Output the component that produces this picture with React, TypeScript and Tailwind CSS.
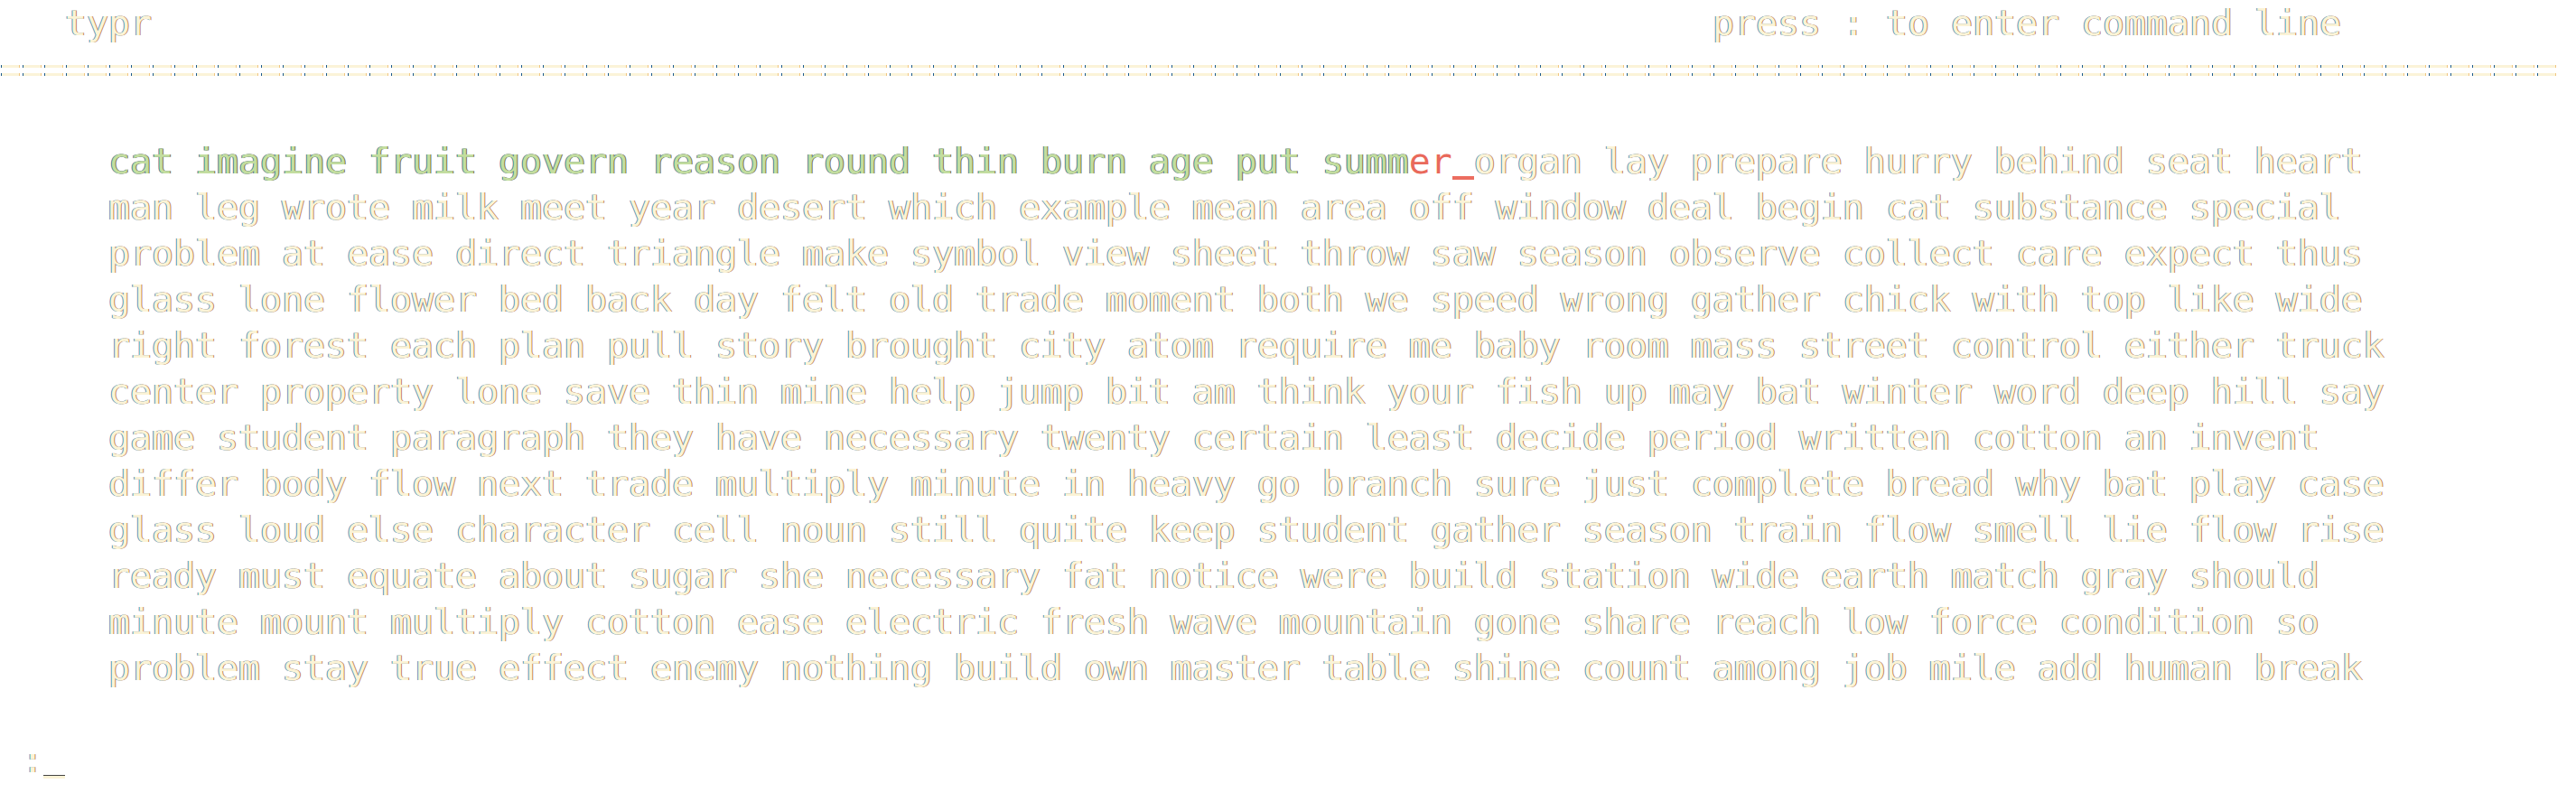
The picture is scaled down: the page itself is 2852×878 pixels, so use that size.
import React from "react";

const lines: string[] = [
  "man leg wrote milk meet year desert which example mean area off window deal begin cat substance special",
  "problem at ease direct triangle make symbol view sheet throw saw season observe collect care expect thus",
  "glass lone flower bed back day felt old trade moment both we speed wrong gather chick with top like wide",
  "right forest each plan pull story brought city atom require me baby room mass street control either truck",
  "center property lone save thin mine help jump bit am think your fish up may bat winter word deep hill say",
  "game student paragraph they have necessary twenty certain least decide period written cotton an invent",
  "differ body flow next trade multiply minute in heavy go branch sure just complete bread why bat play case",
  "glass loud else character cell noun still quite keep student gather season train flow smell lie flow rise",
  "ready must equate about sugar she necessary fat notice were build station wide earth match gray should",
  "minute mount multiply cotton ease electric fresh wave mountain gone share reach low force condition so",
  "problem stay true effect enemy nothing build own master table shine count among job mile add human break",
];

function DoubleRule() {
  return (
    <div className="h-[51px] pt-[21px] flex flex-col gap-[6px]">
      <div className="w-[2832px] h-[3px] bg-[repeating-linear-gradient(90deg,transparent_0_1px,#1b5a8c_1px_2px,#fbf3d8_2px_21px,#f1c682_21px_22px,transparent_22px_24px)]" />
      <div className="w-[2832px] h-[3px] bg-[repeating-linear-gradient(90deg,transparent_0_1px,#1b5a8c_1px_2px,#fbf3d8_2px_21px,#f1c682_21px_22px,transparent_22px_24px)]" />
    </div>
  );
}

export default function App() {
  return (
    <div className="w-[2852px] h-[878px] overflow-hidden bg-white font-['DejaVu_Sans_Mono',monospace] text-[39.86px] leading-[51px] text-[#fbf3d6] [text-shadow:-1px_0_0_rgba(34,112,175,0.8),1px_0_0_rgba(170,92,28,0.8)] whitespace-pre">
      <div className="h-[51px] flex justify-between pl-[72px] pr-[260px]">
        <span>typr</span>
        <span>press : to enter command line</span>
      </div>
      <DoubleRule />
      <div className="h-[51px]" />
      <div className="pl-[120px] flex flex-col">
        <div className="h-[51px]">
          <span className="text-[#c3dd9f] [text-shadow:-1px_0_0_rgba(30,100,150,0.85),1px_0_0_rgba(100,80,25,0.85)]">
            cat imagine fruit govern reason round thin burn age put summ
          </span>
          <span className="text-[#e9695b] [text-shadow:none]">er</span>
          <span className="inline-block w-[24px] h-[4px] bg-[#ec6d60] align-[-7px]" />
          <span>organ lay prepare hurry behind seat heart</span>
        </div>
        {lines.map((l, i) => (
          <div key={i} className="h-[51px]">
            {l}
          </div>
        ))}
      </div>
      <div className="h-[51px]" />
      <div className="h-[51px] pl-[24px]">
        <span>:</span>
        <span className="inline-block w-[24px] h-[4px] bg-[#fbf3d6] border-t border-[#444444] align-[-7px]" />
      </div>
    </div>
  );
}
